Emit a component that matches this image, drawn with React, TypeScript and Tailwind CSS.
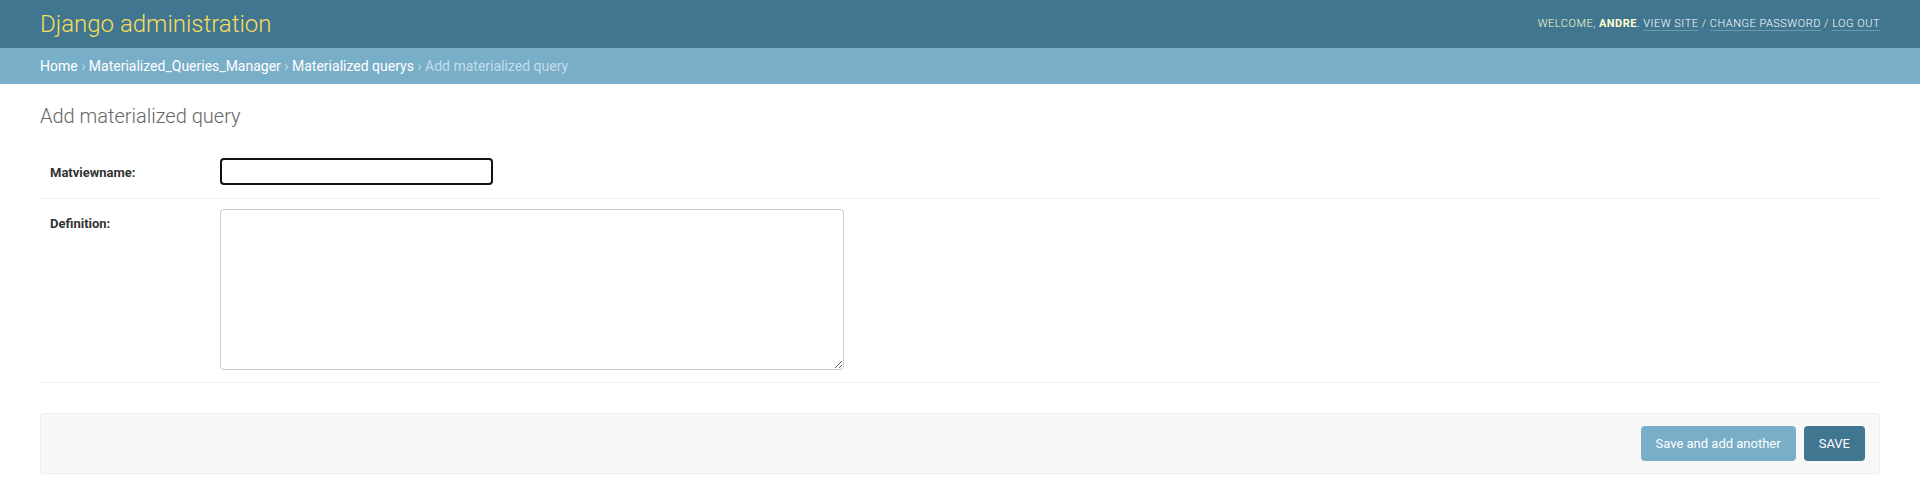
export default function App() {
  const crumbs = ["Home", "Materialized_Queries_Manager", "Materialized querys"];

  return (
    <div className="min-h-[494px] bg-white font-['Roboto','Liberation_Sans',sans-serif] text-[14px] text-[#333]">
      {/* Header */}
      <div className="flex items-center justify-between bg-[#417690] px-[40px] py-[10px] text-[#ffc]">
        <h1 className="text-[24px] font-light leading-[28px] text-[#f5dd5d]">Django administration</h1>
        <div className="text-[11px] font-light uppercase tracking-[0.5px] leading-[14px]">
          Welcome, <strong className="font-bold text-[#ffc]">andre</strong>.{" "}
          <a className="border-b border-white/25 text-white">View site</a> /{" "}
          <a className="border-b border-white/25 text-white">Change password</a> /{" "}
          <a className="border-b border-white/25 text-white">Log out</a>
        </div>
      </div>

      {/* Breadcrumbs */}
      <div className="bg-[#79aec8] px-[40px] py-[10px] text-[14px] leading-[16px] text-[#c4dce8]">
        {crumbs.map((c) => (
          <span key={c}>
            <a className="text-white">{c}</a> ›{" "}
          </span>
        ))}
        Add materialized query
      </div>

      {/* Content */}
      <div className="px-[40px] pt-[20px] pb-[20px]">
        <h1 className="mb-[20px] text-[20px] font-light leading-[24px] text-[#666]">Add materialized query</h1>

        <div className="flex border-b border-[#eee] p-[10px] pb-[13px]">
          <label className="w-[170px] shrink-0 pr-[10px] pt-[8px] text-[13px] font-bold leading-none text-[#333]">
            Matviewname:
          </label>
          <input
            type="text"
            className="block h-[27px] w-[273px] rounded-[4px] border-2 border-[#111] bg-white px-[6px] text-[13px]"
          />
        </div>

        <div className="flex border-b border-[#eee] p-[10px] pb-[12px]">
          <label className="w-[170px] shrink-0 pr-[10px] pt-[8px] text-[13px] font-bold leading-none text-[#333]">
            Definition:
          </label>
          <textarea className="block h-[161px] w-[624px] rounded-[4px] border border-[#ccc] bg-white px-[6px] py-[5px] text-[13px]" />
        </div>

        <div className="mt-[30px] flex justify-end gap-[8px] rounded-[4px] border border-[#eee] bg-[#f8f8f8] px-[14px] py-[12px]">
          <button className="h-[35px] rounded-[4px] bg-[#79aec8] px-[15px] text-[13px] text-white">
            Save and add another
          </button>
          <button className="h-[35px] rounded-[4px] bg-[#417690] px-[15px] text-[13px] uppercase text-white">
            Save
          </button>
        </div>
      </div>
    </div>
  );
}
